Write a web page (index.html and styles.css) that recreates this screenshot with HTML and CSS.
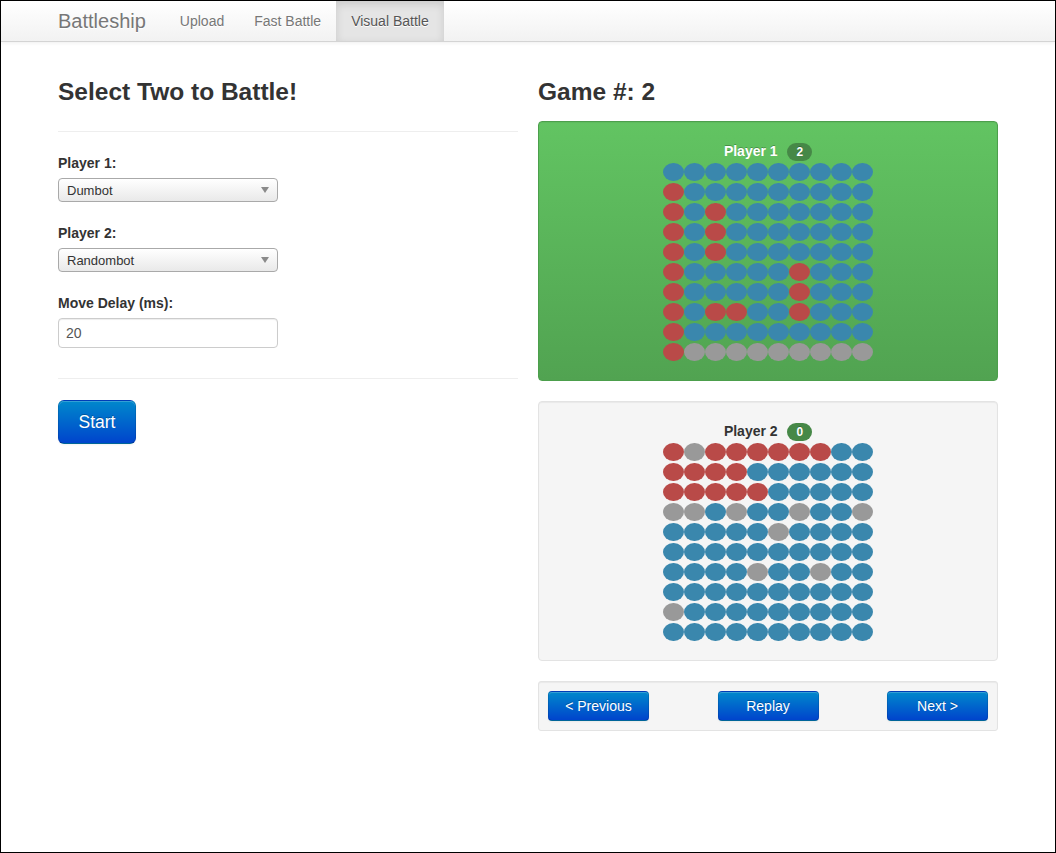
FILE: index.html
```html
<!DOCTYPE html>
<html>
<head>
<meta charset="utf-8">
<title>Battleship</title>
<link rel="stylesheet" href="styles.css">
</head>
<body>
<div class="frame">
  <div class="navbar">
    <div class="nav-inner">
      <a class="brand">Battleship</a>
      <a class="nav-link">Upload</a>
      <a class="nav-link">Fast Battle</a>
      <a class="nav-link active">Visual Battle</a>
    </div>
  </div>
  <div class="container">
    <div class="col">
      <h3>Select Two to Battle!</h3>
      <hr class="hr-top">
      <label class="lbl">Player 1:</label>
      <div class="select-wrap"><select class="select"><option>Dumbot</option></select><span class="caret"></span></div>
      <label class="lbl">Player 2:</label>
      <div class="select-wrap"><select class="select"><option>Randombot</option></select><span class="caret"></span></div>
      <label class="lbl">Move Delay (ms):</label>
      <input class="input" type="text" value="20">
      <hr class="hr-bottom">
      <button class="btn btn-large">Start</button>
    </div>
    <div class="col">
      <h3>Game #: 2</h3>
      <div class="well well-green">
        <div class="board-title light">Player 1 <span class="badge">2</span></div>
        <div class="board">
          <span class="b"></span><span class="b"></span><span class="b"></span><span class="b"></span><span class="b"></span><span class="b"></span><span class="b"></span><span class="b"></span><span class="b"></span><span class="b"></span>
          <span class="r"></span><span class="b"></span><span class="b"></span><span class="b"></span><span class="b"></span><span class="b"></span><span class="b"></span><span class="b"></span><span class="b"></span><span class="b"></span>
          <span class="r"></span><span class="b"></span><span class="r"></span><span class="b"></span><span class="b"></span><span class="b"></span><span class="b"></span><span class="b"></span><span class="b"></span><span class="b"></span>
          <span class="r"></span><span class="b"></span><span class="r"></span><span class="b"></span><span class="b"></span><span class="b"></span><span class="b"></span><span class="b"></span><span class="b"></span><span class="b"></span>
          <span class="r"></span><span class="b"></span><span class="r"></span><span class="b"></span><span class="b"></span><span class="b"></span><span class="b"></span><span class="b"></span><span class="b"></span><span class="b"></span>
          <span class="r"></span><span class="b"></span><span class="b"></span><span class="b"></span><span class="b"></span><span class="b"></span><span class="r"></span><span class="b"></span><span class="b"></span><span class="b"></span>
          <span class="r"></span><span class="b"></span><span class="b"></span><span class="b"></span><span class="b"></span><span class="b"></span><span class="r"></span><span class="b"></span><span class="b"></span><span class="b"></span>
          <span class="r"></span><span class="b"></span><span class="r"></span><span class="r"></span><span class="b"></span><span class="b"></span><span class="r"></span><span class="b"></span><span class="b"></span><span class="b"></span>
          <span class="r"></span><span class="b"></span><span class="b"></span><span class="b"></span><span class="b"></span><span class="b"></span><span class="b"></span><span class="b"></span><span class="b"></span><span class="b"></span>
          <span class="r"></span><span class="g"></span><span class="g"></span><span class="g"></span><span class="g"></span><span class="g"></span><span class="g"></span><span class="g"></span><span class="g"></span><span class="g"></span>
        </div>
      </div>
      <div class="well">
        <div class="board-title">Player 2 <span class="badge">0</span></div>
        <div class="board">
          <span class="r"></span><span class="g"></span><span class="r"></span><span class="r"></span><span class="r"></span><span class="r"></span><span class="r"></span><span class="r"></span><span class="b"></span><span class="b"></span>
          <span class="r"></span><span class="r"></span><span class="r"></span><span class="r"></span><span class="b"></span><span class="b"></span><span class="b"></span><span class="b"></span><span class="b"></span><span class="b"></span>
          <span class="r"></span><span class="r"></span><span class="r"></span><span class="r"></span><span class="r"></span><span class="b"></span><span class="b"></span><span class="b"></span><span class="b"></span><span class="b"></span>
          <span class="g"></span><span class="g"></span><span class="b"></span><span class="g"></span><span class="b"></span><span class="b"></span><span class="g"></span><span class="b"></span><span class="b"></span><span class="g"></span>
          <span class="b"></span><span class="b"></span><span class="b"></span><span class="b"></span><span class="b"></span><span class="g"></span><span class="b"></span><span class="b"></span><span class="b"></span><span class="b"></span>
          <span class="b"></span><span class="b"></span><span class="b"></span><span class="b"></span><span class="b"></span><span class="b"></span><span class="b"></span><span class="b"></span><span class="b"></span><span class="b"></span>
          <span class="b"></span><span class="b"></span><span class="b"></span><span class="b"></span><span class="g"></span><span class="b"></span><span class="b"></span><span class="g"></span><span class="b"></span><span class="b"></span>
          <span class="b"></span><span class="b"></span><span class="b"></span><span class="b"></span><span class="b"></span><span class="b"></span><span class="b"></span><span class="b"></span><span class="b"></span><span class="b"></span>
          <span class="g"></span><span class="b"></span><span class="b"></span><span class="b"></span><span class="b"></span><span class="b"></span><span class="b"></span><span class="b"></span><span class="b"></span><span class="b"></span>
          <span class="b"></span><span class="b"></span><span class="b"></span><span class="b"></span><span class="b"></span><span class="b"></span><span class="b"></span><span class="b"></span><span class="b"></span><span class="b"></span>
        </div>
      </div>
      <div class="well well-small controls">
        <button class="btn">&lt; Previous</button>
        <button class="btn">Replay</button>
        <button class="btn">Next &gt;</button>
      </div>
    </div>
  </div>
</div>
</body>
</html>
```

FILE: styles.css
```css
* { box-sizing: border-box; }
html, body { margin: 0; padding: 0; }
body {
  font-family: "Liberation Sans", Arial, sans-serif;
  font-size: 14px;
  line-height: 20px;
  color: #333;
  background: #fff;
}
.frame {
  width: 1056px;
  height: 853px;
  border: 1px solid #000;
  overflow: hidden;
}
.navbar {
  height: 41px;
  background: linear-gradient(#ffffff, #f2f2f2);
  border-bottom: 1px solid #d4d4d4;
  box-shadow: 0 1px 4px rgba(0,0,0,0.065);
}
.nav-inner {
  width: 940px;
  margin: 0 auto;
  display: flex;
}
.brand {
  font-size: 20px;
  line-height: 20px;
  padding: 10px 19px 10px 0;
  color: #777;
  text-shadow: 0 1px 0 #fff;
}
.nav-link {
  padding: 10px 15px;
  color: #777;
  text-shadow: 0 1px 0 #fff;
}
.nav-link.active {
  background: #e5e5e5;
  color: #555;
  box-shadow: inset 0 3px 8px rgba(0,0,0,0.125);
}
.container {
  width: 940px;
  margin: 0 auto;
  padding-top: 21px;
  display: grid;
  grid-template-columns: 460px 460px;
  column-gap: 20px;
  align-items: start;
}
.col { display: flex; flex-direction: column; align-items: flex-start; }
h3 {
  font-size: 24.5px;
  line-height: 40px;
  font-weight: bold;
  margin: 9px 0;
  color: #333;
}
hr {
  width: 100%;
  margin: 0;
  border: 0;
  border-top: 1px solid #eee;
  border-bottom: 1px solid #fff;
}
.hr-top { margin: 10px 0 20px; }
.hr-bottom { margin: 30px 0 20px; }
.lbl {
  display: block;
  font-weight: bold;
  margin-bottom: 5px;
}
.select-wrap {
  position: relative;
  width: 220px;
  height: 24px;
  margin-bottom: 21px;
}
.select {
  appearance: none;
  -webkit-appearance: none;
  width: 100%;
  height: 24px;
  border: 1px solid #a9a9a9;
  border-radius: 4px;
  background: linear-gradient(#ffffff, #e9e9e9);
  font-family: "Liberation Sans", Arial, sans-serif;
  font-size: 13px;
  color: #333;
  padding: 0 0 0 8px;
  margin: 0;
}
.caret {
  position: absolute;
  right: 9px;
  top: 9px;
  width: 0;
  height: 0;
  border-left: 4px solid transparent;
  border-right: 4px solid transparent;
  border-top: 6px solid #8a8a8a;
}
.input {
  width: 220px;
  height: 30px;
  border: 1px solid #ccc;
  border-radius: 4px;
  box-shadow: inset 0 1px 1px rgba(0,0,0,0.075);
  padding: 4px 7px;
  font-family: "Liberation Sans", Arial, sans-serif;
  font-size: 14px;
  color: #555;
  margin: 0;
}
.btn {
  font-family: "Liberation Sans", Arial, sans-serif;
  font-size: 14px;
  line-height: 20px;
  padding: 4px 12px;
  height: 30px;
  width: 101px;
  color: #fff;
  text-shadow: 0 -1px 0 rgba(0,0,0,0.25);
  background: linear-gradient(#0088cc, #0044cc);
  border: 1px solid #0044cc;
  border-color: rgba(0,0,0,0.1) rgba(0,0,0,0.1) rgba(0,0,0,0.25);
  border-radius: 4px;
  box-shadow: inset 0 1px 0 rgba(255,255,255,0.2), 0 1px 2px rgba(0,0,0,0.05);
  cursor: pointer;
}
.btn-large {
  font-size: 17.5px;
  padding: 11px 19px;
  height: 44px;
  width: 78px;
  border-radius: 6px;
}
.well {
  width: 460px;
  height: 260px;
  padding: 19px;
  margin-bottom: 20px;
  background: #f5f5f5;
  border: 1px solid #e3e3e3;
  border-radius: 4px;
  box-shadow: inset 0 1px 1px rgba(0,0,0,0.05);
}
.well-green {
  background: linear-gradient(#62c462, #51a351);
  border-color: #4c9f4c;
}
.board-title {
  text-align: center;
  font-weight: bold;
  line-height: 20px;
  color: #333;
}
.board-title.light {
  color: #fff;
  text-shadow: 0 -1px 0 rgba(0,0,0,0.25);
}
.badge {
  display: inline-block;
  margin-left: 6px;
  padding: 2px 9px;
  font-size: 11.9px;
  font-weight: bold;
  line-height: 14px;
  color: #fff;
  text-shadow: 0 -1px 0 rgba(0,0,0,0.25);
  background: #468847;
  border-radius: 9px;
  vertical-align: baseline;
}
.board {
  width: 210px;
  margin: 0 auto;
  display: grid;
  grid-template-columns: repeat(10, 21px);
  grid-auto-rows: 20px;
}
.board span {
  display: block;
  width: 20.5px;
  height: 18px;
  margin-top: 2px;
  border-radius: 50%;
}
.board .b { background: #3a87ad; }
.board .r { background: #b94a48; }
.board .g { background: #999999; }
.well-small {
  height: 50px;
  padding: 9px;
  border-radius: 3px;
}
.controls {
  display: flex;
  justify-content: space-between;
}
```
